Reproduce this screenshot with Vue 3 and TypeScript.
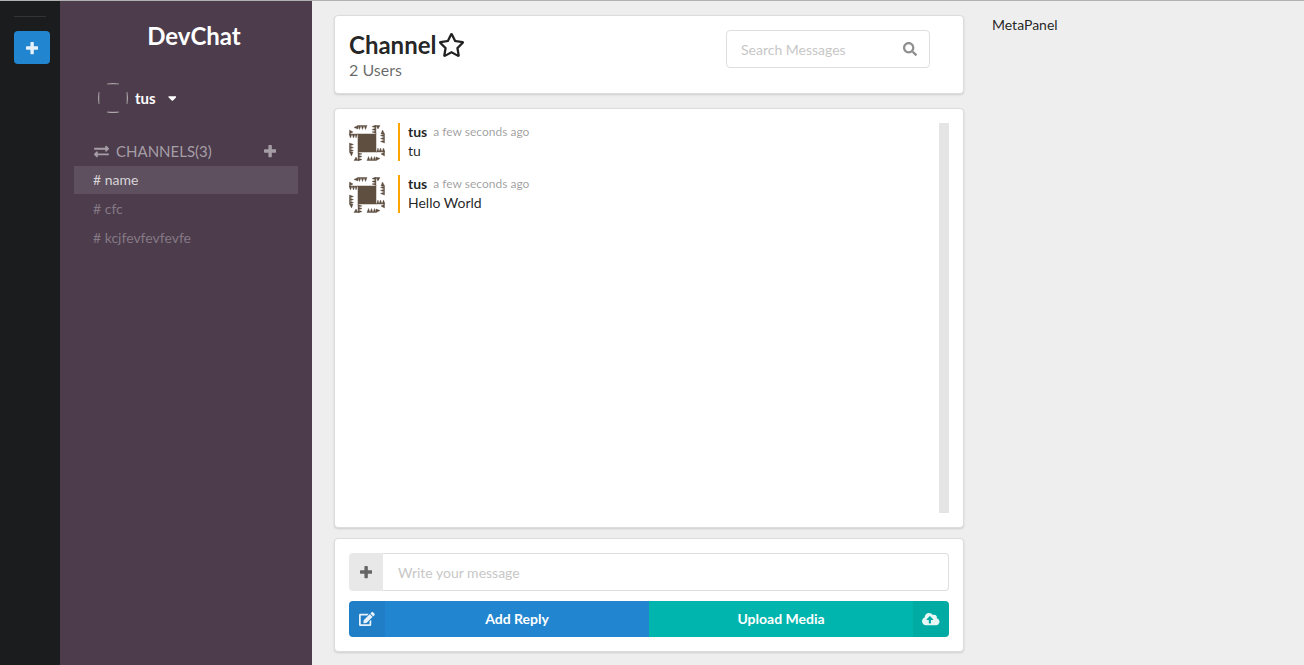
<script setup lang="ts">
import { ref } from 'vue'

interface Channel {
  id: number
  name: string
}

interface Message {
  id: number
  user: string
  time: string
  text: string
}

const channels: Channel[] = [
  { id: 1, name: 'name' },
  { id: 2, name: 'cfc' },
  { id: 3, name: 'kcjfevfevfevfe' },
]

const messages: Message[] = [
  { id: 1, user: 'tus', time: 'a few seconds ago', text: 'tu' },
  { id: 2, user: 'tus', time: 'a few seconds ago', text: 'Hello World' },
]

const activeChannel = ref(1)
const search = ref('')
const draft = ref('')

const turns = [0, 90, 180, 270]
const plusPath =
  'M448 294.2v-76.4c0-13.3-10.7-24-24-24H286.2V56c0-13.3-10.7-24-24-24h-76.4c-13.3 0-24 10.7-24 24v137.8H24c-13.3 0-24 10.7-24 24v76.4c0 13.3 10.7 24 24 24h137.8V456c0 13.3 10.7 24 24 24h76.4c13.3 0 24-10.7 24-24V318.2H424c13.3 0 24-10.7 24-24z'
</script>

<template>
  <div class="app">
    <aside class="rail">
      <hr class="rail-divider" />
      <button class="rail-add" type="button" aria-label="Add theme">
        <svg class="icon" viewBox="0 0 448 512"><path :d="plusPath" /></svg>
      </button>
    </aside>

    <nav class="sidebar">
      <h1 class="brand">DevChat</h1>
      <button class="user" type="button">
        <svg class="user-ring" viewBox="0 0 30 30">
          <path d="M9 1Q15 0 21 1ZM9 29Q15 30 21 29ZM1 9Q0 15 1 21ZM29 9Q30 15 29 21Z" />
        </svg>
        <span>tus</span>
        <svg class="caret" viewBox="0 0 320 512">
          <path d="M31.3 192h257.3c17.8 0 26.7 21.5 14.1 34.1L174.1 354.8c-7.8 7.8-20.5 7.8-28.3 0L17.2 226.1C4.6 213.5 13.5 192 31.3 192z" />
        </svg>
      </button>

      <div class="channels-head">
        <svg class="exchange" viewBox="0 0 512 512">
          <path d="M0 168v-16c0-13.255 10.745-24 24-24h360V80c0-21.367 25.899-32.042 40.971-16.971l80 80c9.372 9.373 9.372 24.569 0 33.941l-80 80C409.956 271.982 384 261.456 384 240v-48H24c-13.255 0-24-10.745-24-24zm488 152H128v-48c0-21.314-25.862-32.08-40.971-16.971l-80 80c-9.372 9.373-9.372 24.569 0 33.941l80 80C102.057 463.997 128 453.437 128 432v-48h360c13.255 0 24-10.745 24-24v-16c0-13.255-10.745-24-24-24z" />
        </svg>
        <span class="channels-title">CHANNELS({{ channels.length }})</span>
        <button class="channels-add" type="button" aria-label="Add channel">
          <svg class="icon" viewBox="0 0 448 512"><path :d="plusPath" /></svg>
        </button>
      </div>
      <ul class="channel-list">
        <li v-for="channel in channels" :key="channel.id">
          <button
            class="channel"
            :class="{ active: channel.id === activeChannel }"
            type="button"
            @click="activeChannel = channel.id"
          ># {{ channel.name }}</button>
        </li>
      </ul>
    </nav>

    <main class="main">
      <header class="segment header">
        <div>
          <h2 class="title">
            Channel
            <svg class="star" viewBox="0 0 576 512">
              <path d="M528.1 171.5L382 150.2 316.7 17.8c-11.7-23.6-45.6-23.9-57.4 0L194 150.2 47.9 171.5c-26.2 3.8-36.7 36.1-17.7 54.6l105.7 103-25 145.5c-4.5 26.3 23.2 46 46.4 33.7L288 439.6l130.7 68.7c23.2 12.2 50.9-7.4 46.4-33.7l-25-145.5 105.7-103c19-18.5 8.5-50.8-17.7-54.6zM388.6 312.3l23.7 138.4L288 385.4l-124.3 65.3 23.7-138.4-100.6-98 139-20.2 62.2-126 62.2 126 139 20.2-100.6 98z" />
            </svg>
          </h2>
          <p class="subtitle">2 Users</p>
        </div>
        <label class="search">
          <input v-model="search" type="text" placeholder="Search Messages" aria-label="Search Messages" />
          <svg class="icon" viewBox="0 0 512 512">
            <path d="M505 442.7L405.3 343c-4.5-4.5-10.6-7-17-7H372c27.6-35.3 44-79.7 44-128C416 93.1 322.9 0 208 0S0 93.1 0 208s93.1 208 208 208c48.3 0 92.7-16.4 128-44v16.3c0 6.4 2.5 12.5 7 17l99.7 99.7c9.4 9.4 24.6 9.4 33.9 0l28.3-28.3c9.4-9.4 9.4-24.6.1-34zM208 336c-70.7 0-128-57.2-128-128 0-70.7 57.2-128 128-128 70.7 0 128 57.2 128 128 0 70.7-57.2 128-128 128z" />
          </svg>
        </label>
      </header>

      <section class="segment messages">
        <div class="message-list">
          <article v-for="message in messages" :key="message.id" class="message">
            <svg class="avatar" viewBox="0 0 36 36">
              <rect class="avatar-frame" x="8" y="8" width="20" height="20" />
              <rect x="9" y="9" width="18" height="18" />
              <g v-for="turn in turns" :key="turn" class="teeth" :transform="`rotate(${turn} 18 18)`">
                <path d="M9 .5h3l-1.500 4zM12 .5h3l-1.500 4zM15 .5h3l-1.500 4z" />
                <path d="M0 9h3l-1.500 4zM3 9h3l-1.500 4zM6 9h2.500l-1.500 4z" />
                <path d="M9 .5v3.500l-4-1.500zM.5 5l3.500 2-3.500 2z" />
              </g>
            </svg>
            <div class="bubble">
              <div class="meta">
                <strong class="author">{{ message.user }}</strong>
                <span class="time">{{ message.time }}</span>
              </div>
              <div class="text">{{ message.text }}</div>
            </div>
          </article>
        </div>
        <div class="track" />
      </section>

      <form class="segment composer" @submit.prevent>
        <div class="compose-field">
          <button class="attach" type="button" aria-label="Add emoji">
            <svg class="icon" viewBox="0 0 448 512"><path :d="plusPath" /></svg>
          </button>
          <input v-model="draft" type="text" placeholder="Write your message" aria-label="Write your message" />
        </div>
        <div class="actions">
          <button class="action reply" type="submit">
            <span class="action-icon">
              <svg class="icon edit" viewBox="0 0 576 512">
                <path d="M402.600 83.200l90.200 90.200c3.800 3.800 3.800 10 0 13.800L274.400 405.600l-92.800 10.300c-12.400 1.400-22.900-9.100-21.500-21.500l10.300-92.800L388.800 83.200c3.800-3.800 10-3.800 13.800 0zm162-22.900l-48.800-48.800c-15.200-15.200-39.900-15.200-55.200 0l-35.400 35.400c-3.800 3.800-3.800 10 0 13.800l90.200 90.200c3.800 3.800 10 3.800 13.800 0l35.400-35.400c15.200-15.300 15.200-40 0-55.200zM384 346.200V448H64V128h229.800c3.200 0 6.200-1.300 8.500-3.500l40-40c7.600-7.600 2.200-20.500-8.500-20.500H48C21.500 64 0 85.500 0 112v352c0 26.500 21.500 48 48 48h352c26.500 0 48-21.500 48-48V306.200c0-10.700-12.900-16-20.500-8.500l-40 40c-2.200 2.300-3.500 5.300-3.500 8.500z" />
              </svg>
            </span>
            <span class="action-label">Add Reply</span>
          </button>
          <button class="action upload" type="button">
            <span class="action-label">Upload Media</span>
            <span class="action-icon">
              <svg class="icon cloud" viewBox="0 0 640 512">
                <path d="M537.600 226.600c4.100-10.700 6.400-22.400 6.400-34.600 0-53-43-96-96-96-19.700 0-38.100 6-53.300 16.200C367 64.200 315.300 32 256 32c-88.400 0-160 71.600-160 160 0 2.700.1 5.400.2 8.100C40.200 219.800 0 273.200 0 336c0 79.500 64.500 144 144 144h368c70.700 0 128-57.300 128-128 0-61.900-44-113.600-102.400-125.400zM393.400 288H328v112c0 8.800-7.200 16-16 16h-48c-8.800 0-16-7.200-16-16V288h-65.400c-14.300 0-21.400-17.200-11.300-27.300l105.400-105.400c6.200-6.200 16.400-6.200 22.600 0l105.400 105.400c10.100 10.100 2.900 27.300-11.300 27.300z" />
              </svg>
            </span>
          </button>
        </div>
      </form>
    </main>

    <aside class="meta-panel">MetaPanel</aside>
  </div>
</template>

<style>
body {
  margin: 0;
  background: #eee;
}
</style>

<style scoped>
.app {
  box-sizing: border-box;
  display: grid;
  grid-template-columns: 60px 252px minmax(0, 1fr) 25%;
  min-height: 100vh;
  border-top: 1px solid #b1b1b1;
  background: #eee;
  color: rgba(0, 0, 0, 0.87);
  font: 14px/20px Lato, "Liberation Sans", sans-serif;
}

button,
input {
  font: inherit;
  color: inherit;
}

button {
  border: 0;
  padding: 0;
  background: none;
  cursor: pointer;
}

svg {
  fill: currentColor;
}

.icon {
  display: block;
  height: 14px;
}

.rail {
  background: #1b1c1d;
  padding: 15px 10px 0 14px;
}

.rail-divider {
  width: 32px;
  margin: 0 0 14px;
  border: 0;
  border-top: 1px solid #323334;
}

.rail-add {
  display: flex;
  align-items: center;
  justify-content: center;
  width: 36px;
  height: 33px;
  border-radius: 4px;
  background: #2185d0;
  color: #e6f1fa;
}

.sidebar {
  background: #4c3c4c;
  padding: 20px 14px 0;
}

.brand {
  margin: 0 0 32px;
  padding-left: 16px;
  color: #fff;
  font-size: 24px;
  line-height: 30px;
  text-align: center;
}

.user {
  display: flex;
  align-items: center;
  margin-left: 24px;
  color: #fff;
  font-size: 15px;
  font-weight: 700;
  line-height: 18px;
}

.user-ring {
  width: 30px;
  height: 30px;
  margin-right: 7px;
  fill: #d8d8d4;
  stroke: #d8d8d4;
  stroke-width: 0.3;
}

.caret {
  height: 14px;
  margin-left: 12px;
}

.channels-head {
  display: flex;
  align-items: center;
  margin: 28px 0 5px;
  padding: 0 22px 0 20px;
  color: #a69ea6;
}

.exchange {
  width: 15px;
  margin-right: 7px;
}

.channels-title {
  flex: 1;
  font-size: 15px;
}

.channel-list {
  display: grid;
  gap: 1px;
  margin: 0;
  padding: 0;
  list-style: none;
}

.channel {
  display: block;
  width: 100%;
  height: 28px;
  padding: 0 19px;
  color: #857985;
  text-align: left;
}

.channel.active {
  background: #5e505e;
  color: #d8d4d8;
}

.main {
  display: flex;
  flex-direction: column;
  padding: 14px 14px 13px 22px;
}

.segment {
  box-sizing: border-box;
  padding: 14px;
  border: 1px solid #dcdcdc;
  border-radius: 4px;
  background: #fff;
  box-shadow: 0 1px 2px rgba(34, 36, 38, 0.15);
}

.header {
  display: flex;
  justify-content: space-between;
  margin-bottom: 14px;
  padding-right: 33px;
  padding-bottom: 13px;
}

.title {
  display: flex;
  align-items: center;
  gap: 2px;
  margin: 0;
  font-size: 24px;
  line-height: 30px;
}

.star {
  width: 27px;
  height: 24px;
}

.subtitle {
  margin: 0;
  color: rgba(0, 0, 0, 0.6);
  font-size: 16px;
  line-height: 20px;
}

.search {
  box-sizing: border-box;
  display: flex;
  align-items: center;
  width: 204px;
  height: 38px;
  padding: 0 12px 0 14px;
  border: 1px solid #dededf;
  border-radius: 4px;
  color: #8f8f8f;
}

input {
  flex: 1;
  min-width: 0;
  padding: 2px 0 0;
  border: 0;
  outline: 0;
  background: none;
}

input::placeholder {
  color: #c7c7c7;
}

.messages {
  display: flex;
  flex: 1;
  margin-bottom: 10px;
}

.message-list {
  flex: 1;
}

.message {
  display: flex;
  margin-bottom: 14px;
}

.avatar {
  width: 36px;
  height: 36px;
  margin: 2px 13px 0 0;
  border-radius: 4px;
  fill: #5e4f41;
}

.avatar-frame {
  fill: #d6d1cb;
}

.teeth {
  stroke: #5e4f41;
  stroke-width: 0.4;
}

.bubble {
  padding-left: 8px;
  border-left: 2px solid orange;
}

.meta {
  display: flex;
  gap: 6px;
  line-height: 18px;
}

.time {
  color: rgba(0, 0, 0, 0.4);
  font-size: 12px;
}

.track {
  width: 10px;
  background: #e5e5e5;
}

.compose-field {
  display: flex;
  height: 38px;
  margin-bottom: 10px;
}

.attach {
  display: flex;
  align-items: center;
  justify-content: center;
  width: 34px;
  border-radius: 4px 0 0 4px;
  background: #e8e8e8;
  color: #666;
}

.compose-field input {
  padding: 2px 15px 0;
  border: 1px solid #dededf;
  border-left: 0;
  border-radius: 0 4px 4px 0;
}

.actions {
  display: flex;
}

.action {
  display: flex;
  flex: 1;
  height: 36px;
  overflow: hidden;
  color: #fff;
  font-weight: 700;
}

.reply {
  border-radius: 4px 0 0 4px;
  background: #2185d0;
}

.upload {
  border-radius: 0 4px 4px 0;
  background: #00b5ad;
}

.action-icon {
  display: flex;
  align-items: center;
  justify-content: center;
  width: 36px;
  height: 36px;
  background: rgba(0, 0, 0, 0.05);
  color: rgba(255, 255, 255, 0.9);
}

.action-label {
  flex: 1;
  line-height: 36px;
}

.meta-panel {
  padding: 14px;
}
</style>
